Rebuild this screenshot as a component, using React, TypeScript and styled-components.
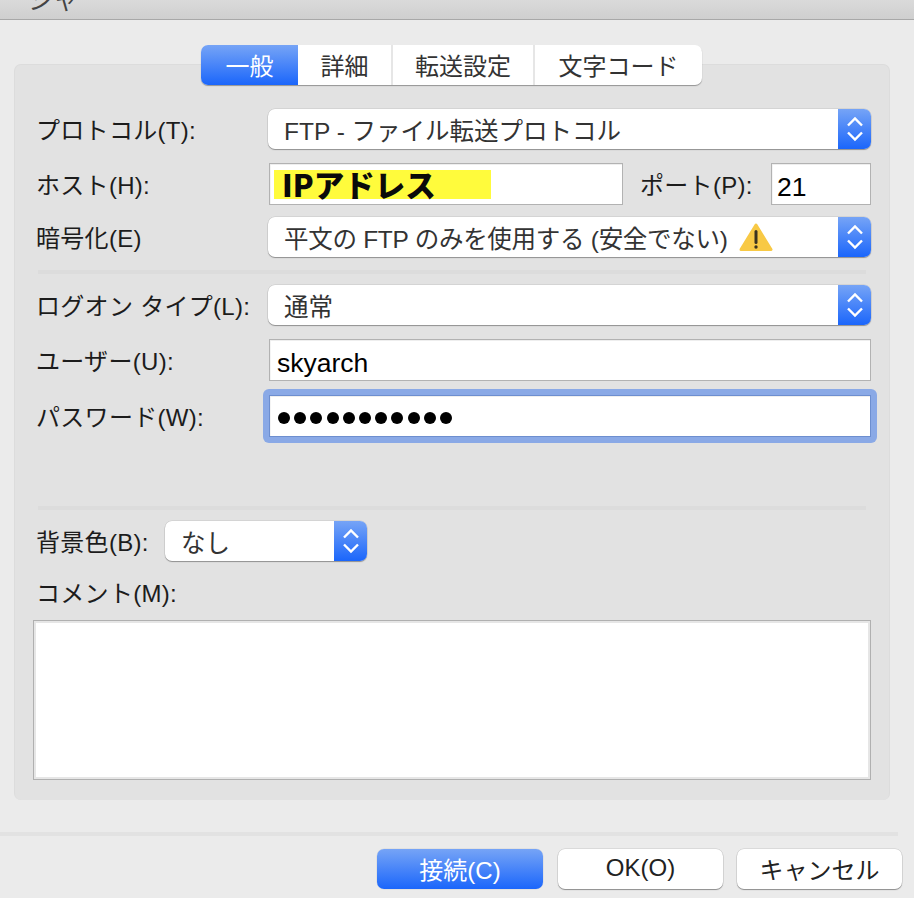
import { createGlobalStyle, styled } from "styled-components";

const GlobalStyle = createGlobalStyle`
  html, body {
    margin: 0;
    padding: 0;
    background: #ebebeb;
  }
  * {
    box-sizing: border-box;
  }
`;

const JP = `"Noto Sans CJK JP", "Noto Sans", sans-serif`;
const LATIN = `"Liberation Sans", "Noto Sans CJK JP", sans-serif`;

const Window = styled.div`
  width: 914px;
  height: 898px;
  overflow: hidden;
  background: #ebebeb;
  font-family: ${LATIN};
  display: flex;
  flex-direction: column;
`;

const TitleBar = styled.div`
  height: 20px;
  flex: none;
  overflow: hidden;
  background: linear-gradient(#dadada, #cfcfcf);
  border-bottom: 1px solid #a8a8a8;
  font-family: ${JP};
  font-size: 26px;
  line-height: 26px;
  color: #444;
  white-space: nowrap;
`;

const TitleText = styled.div`
  margin: -15px 0 0 -24px;
`;

const Panel = styled.div`
  margin: 44px 24px 0 14px;
  height: 736px;
  flex: none;
  background: #e2e2e2;
  border: 1px solid #dcdcdc;
  border-bottom: none;
  border-radius: 7px;
  padding: 0 18px 0 21px;
`;

const TabBar = styled.div`
  display: flex;
  width: 501px;
  height: 40px;
  margin: -20px auto 24px;
  position: relative;
  left: -2px;
  border-radius: 7px;
  background: #fff;
  box-shadow: 0 1px 1px rgba(0, 0, 0, 0.35);
`;

const Tab = styled.div<{ $width: number; $active?: boolean }>`
  width: ${(p) => p.$width}px;
  display: flex;
  align-items: center;
  justify-content: center;
  padding-bottom: 2px;
  font-size: 24px;
  color: ${(p) => (p.$active ? "#fff" : "#333")};
  background: ${(p) => (p.$active ? "linear-gradient(#76a4f6, #1b66fb)" : "transparent")};
  border-radius: ${(p) => (p.$active ? "7px 0 0 7px" : "0")};
  border-right: ${(p) => (p.$active ? "none" : "2px solid #e6e6e6")};
  &:last-child {
    border-right: none;
  }
`;

const Row = styled.div<{ $top?: number }>`
  display: flex;
  align-items: center;
  margin-top: ${(p) => p.$top ?? 0}px;
`;

const Label = styled.div<{ $width?: number }>`
  width: ${(p) => p.$width ?? 232}px;
  flex: none;
  padding-top: 4px;
  font-size: 24px;
  line-height: 26px;
  letter-spacing: 0.3px;
  color: #1c1c1c;
  white-space: nowrap;
`;

const PortLabel = styled(Label)`
  width: 131px;
  margin-left: 17px;
`;

const SelectBox = styled.div<{ $width?: number }>`
  display: flex;
  width: ${(p) => p.$width ?? 603}px;
  height: 40px;
  flex: none;
  background: #fff;
  border-radius: 7px;
  overflow: hidden;
  box-shadow: 0 1px 1px rgba(0, 0, 0, 0.32), 0 0 0 0.5px rgba(0, 0, 0, 0.12);
`;

const SelectValue = styled.div<{ $tight?: boolean }>`
  flex: 1;
  display: flex;
  align-items: center;
  padding-left: 16px;
  font-size: 24.5px;
  letter-spacing: ${(p) => (p.$tight ? "-0.28px" : "0")};
  color: #333;
  white-space: nowrap;
`;

const Stepper = styled.div`
  width: 33px;
  flex: none;
  display: flex;
  align-items: center;
  justify-content: center;
  background: linear-gradient(#76a4f6, #1b66fb);
`;

const TextInput = styled.div<{ $width?: number; $focus?: boolean }>`
  width: ${(p) => p.$width ?? 602}px;
  height: 42px;
  flex: none;
  display: flex;
  align-items: center;
  padding: 7px 0 0 7px;
  background: #fff;
  border: 1px solid ${(p) => (p.$focus ? "#6d8ecf" : "#b2b2b2")};
  box-shadow: inset 0 1px 0 #eee, inset 1px 0 0 #f4f4f4;
  font-size: 26.5px;
  color: #000;
`;

const PortInput = styled(TextInput)`
  padding-left: 5px;
`;

const FocusRing = styled.div`
  margin: -6px -6px -6px -5px;
  padding: 6px;
  border-radius: 6px;
  background: #8aa9e6;
`;

const Highlight = styled.div`
  width: 217px;
  height: 29px;
  margin: -7px 0 0 -3px;
  padding-left: 8px;
  background: #fffb3c;
  font-family: ${JP};
  font-weight: 900;
  font-size: 30.5px;
  line-height: 29px;
  color: #0a0a0a;
  white-space: nowrap;
`;

const Dots = styled.div`
  display: flex;
  gap: 4.2px;
  margin: -3px 0 0 1px;
`;

const Dot = styled.span`
  width: 12px;
  height: 12px;
  border-radius: 50%;
  background: #000;
`;

const Divider = styled.div<{ $top: number }>`
  height: 4px;
  width: 828px;
  margin: ${(p) => p.$top}px 0 0 2px;
  background: #dcdcdc;
`;

const CommentArea = styled.div`
  height: 160px;
  width: 838px;
  margin: 13px 0 0 -3px;
  background: #fff;
  border: 1px solid #b0b0b0;
  box-shadow: inset 2px 2px 0 #e6e6e6, inset -2px -2px 0 #e6e6e6;
`;

const FooterLine = styled.div`
  height: 4px;
  width: 898px;
  margin-top: 32px;
  flex: none;
  background: #e2e2e2;
`;

const Footer = styled.div`
  display: flex;
  justify-content: flex-end;
  gap: 14px;
  padding: 13px 12px 0 0;
`;

const Button = styled.div<{ $primary?: boolean }>`
  width: ${(p) => (p.$primary ? 166 : 165)}px;
  height: 40px;
  margin-right: ${(p) => (p.$primary ? 1 : 0)}px;
  padding-bottom: 2px;
  display: flex;
  align-items: center;
  justify-content: center;
  border-radius: 7px;
  font-size: 24px;
  color: ${(p) => (p.$primary ? "#fff" : "#222")};
  background: ${(p) => (p.$primary ? "linear-gradient(#76a4f6, #1b66fb)" : "#fff")};
  box-shadow: ${(p) =>
    p.$primary
      ? "0 0 0 0.5px rgba(0, 0, 0, 0.08)"
      : "0 1px 1px rgba(0, 0, 0, 0.35), 0 0 0 0.5px rgba(0, 0, 0, 0.14)"};
`;

const StepperIcon = () => (
  <svg width="16" height="26" viewBox="0 0 16 26" fill="none" stroke="#fff" strokeWidth="2.4">
    <path d="M1 9.5 8 2.5l7 7" />
    <path d="M1 16.5l7 7 7-7" />
  </svg>
);

const WarningIcon = () => (
  <svg width="34" height="29" viewBox="0 0 34 29" style={{ marginLeft: 11 }}>
    <path
      d="M17 2 32 26.5H2Z"
      fill="#f8c945"
      stroke="#f8c945"
      strokeWidth="3"
      strokeLinejoin="round"
    />
    <path d="M17 8.5v11" stroke="#3a3320" strokeWidth="3" strokeLinecap="round" />
    <circle cx="17" cy="24" r="1.7" fill="#3a3320" />
  </svg>
);

const Select = ({
  value,
  width,
  icon,
}: {
  value: string;
  width?: number;
  icon?: boolean;
}) => (
  <SelectBox $width={width}>
    <SelectValue $tight={icon}>
      {value}
      {icon && <WarningIcon />}
    </SelectValue>
    <Stepper>
      <StepperIcon />
    </Stepper>
  </SelectBox>
);

const tabs = [
  { name: "一般", width: 97 },
  { name: "詳細", width: 95 },
  { name: "転送設定", width: 142 },
  { name: "文字コード", width: 167 },
];

export default function App() {
  return (
    <Window>
      <GlobalStyle />
      <TitleBar>
        <TitleText>ー　ジャ</TitleText>
      </TitleBar>
      <Panel>
        <TabBar>
          {tabs.map((t, i) => (
            <Tab key={t.name} $width={t.width} $active={i === 0}>
              {t.name}
            </Tab>
          ))}
        </TabBar>

        <Row>
          <Label>プロトコル(T):</Label>
          <Select value="FTP - ファイル転送プロトコル" />
        </Row>
        <Row $top={14}>
          <Label $width={233}>ホスト(H):</Label>
          <TextInput $width={354}>
            <Highlight>IPアドレス</Highlight>
          </TextInput>
          <PortLabel>ポート(P):</PortLabel>
          <PortInput $width={100}>21</PortInput>
        </Row>
        <Row $top={12}>
          <Label>暗号化(E)</Label>
          <Select value="平文の FTP のみを使用する (安全でない)" icon />
        </Row>
        <Divider $top={13} />
        <Row $top={11}>
          <Label>ログオン タイプ(L):</Label>
          <Select value="通常" />
        </Row>
        <Row $top={14}>
          <Label $width={233}>ユーザー(U):</Label>
          <TextInput>skyarch</TextInput>
        </Row>
        <Row $top={14}>
          <Label>パスワード(W):</Label>
          <FocusRing>
            <TextInput $focus>
              <Dots>
                {Array.from({ length: 11 }, (_, i) => (
                  <Dot key={i} />
                ))}
              </Dots>
            </TextInput>
          </FocusRing>
        </Row>
        <Divider $top={69} />
        <Row $top={11}>
          <Label $width={129}>背景色(B):</Label>
          <Select value="なし" width={202} />
        </Row>
        <Row $top={16}>
          <Label>コメント(M):</Label>
        </Row>
        <CommentArea />
      </Panel>
      <FooterLine />
      <Footer>
        <Button $primary>接続(C)</Button>
        <Button>OK(O)</Button>
        <Button>キャンセル</Button>
      </Footer>
    </Window>
  );
}
